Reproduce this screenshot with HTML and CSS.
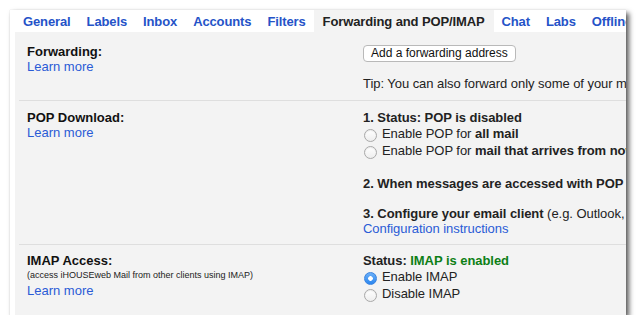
FILE: index.html
```html
<!DOCTYPE html>
<html>
<head>
<meta charset="utf-8">
<link rel="stylesheet" href="styles.css">
</head>
<body>
<div class="shot">
  <nav class="tabs">
    <a class="tab">General</a>
    <a class="tab">Labels</a>
    <a class="tab">Inbox</a>
    <a class="tab">Accounts</a>
    <a class="tab">Filters</a>
    <span class="tab active">Forwarding and POP/IMAP</span>
    <a class="tab">Chat</a>
    <a class="tab">Labs</a>
    <a class="tab">Offline</a>
    <a class="tab">Themes</a>
  </nav>
  <div class="content">
    <div class="row row-fwd">
      <div class="lcol">
        <div class="label">Forwarding:</div>
        <a class="link">Learn more</a>
      </div>
      <div class="rcol">
        <span class="btn">Add a forwarding address</span>
        <div class="line tip">Tip: You can also forward only some of your mail by creating a filter!</div>
      </div>
    </div>
    <div class="row row-pop">
      <div class="lcol">
        <div class="label">POP Download:</div>
        <a class="link">Learn more</a>
      </div>
      <div class="rcol">
        <div class="line"><b>1. Status: POP is disabled</b></div>
        <div class="opt"><span class="radio"></span>Enable POP for <b>all mail</b></div>
        <div class="opt"><span class="radio"></span>Enable POP for <b>mail that arrives from now on</b></div>
        <div class="line sec"><b>2. When messages are accessed with POP</b> <span class="select">keep iHOUSEweb Mail's copy in the Inbox</span></div>
        <div class="line sec"><b>3. Configure your email client</b> (e.g. Outlook, Eudora, Netscape Mail)</div>
        <a class="link line">Configuration instructions</a>
      </div>
    </div>
    <div class="row row-imap">
      <div class="lcol">
        <div class="label">IMAP Access:</div>
        <div class="small">(access iHOUSEweb Mail from other clients using IMAP)</div>
        <a class="link">Learn more</a>
      </div>
      <div class="rcol">
        <div class="line"><b>Status:</b> <b class="green">IMAP is enabled</b></div>
        <div class="opt"><span class="radio on"></span>Enable IMAP</div>
        <div class="opt"><span class="radio"></span>Disable IMAP</div>
      </div>
    </div>
  </div>
</div>
</body>
</html>
```
FILE: styles.css
```css
html, body {
  margin: 0;
  padding: 0;
  background: #fff;
}

body {
  font-family: "Liberation Sans", Arial, Helvetica, sans-serif;
  font-size: 13px;
  color: #222;
}

.shot {
  margin: 10px 0 0 10px;
  width: 616px;
  height: 305px;
  background: #fff;
  box-shadow: 3px 3px 5px rgba(0, 0, 0, 0.65), 0 0 1px rgba(0, 0, 0, 0.18);
  overflow: hidden;
  display: flex;
  flex-direction: column;
}

.tabs {
  display: flex;
  height: 22px;
  padding-left: 5px;
  white-space: nowrap;
  flex: none;
}

.tab {
  padding: 0 8px;
  line-height: 23px;
  font-weight: bold;
  letter-spacing: -0.12px;
  color: #2553c8;
}

.tab.active {
  padding: 0 9px;
  background: #f3f3f3;
  color: #222;
}

.content {
  flex: 1;
  background: #f3f3f3;
  margin-left: 5px;
}

.row {
  display: flex;
  margin-left: 4px;
  border-top: 1px solid #dedede;
  white-space: nowrap;
}

.row-fwd {
  border-top: none;
  padding: 12px 0 9px;
}

.row-pop {
  padding: 9px 0 8px;
}

.row-imap {
  padding: 8px 0 0;
}

.lcol {
  width: 336px;
  padding-left: 8px;
  flex: none;
  line-height: 15px;
}

.rcol {
  flex: none;
  line-height: 15px;
  letter-spacing: -0.05px;
}

.label {
  font-weight: bold;
  color: #111;
}

.link {
  display: block;
  color: #2a5bd6;
}

.small {
  font-size: 9px;
  color: #222;
}

.line {
  display: block;
  height: 15px;
}

.sec {
  margin-top: 16px;
}

.btn {
  display: inline-block;
  margin-top: 1px;
  height: 15px;
  padding: 0 7px;
  border: 1px solid #b9b9b9;
  border-radius: 4px;
  background: #fff;
  font-size: 12px;
  line-height: 15px;
  letter-spacing: 0;
  color: #111;
}

.tip {
  margin-top: 14px;
}

.opt {
  height: 17px;
  line-height: 17px;
}

.radio {
  display: inline-block;
  width: 11px;
  height: 11px;
  margin: 0 5px 0 1px;
  vertical-align: -4px;
  border: 1px solid #a9a9a9;
  border-radius: 50%;
  background: linear-gradient(#ffffff, #eeeeee);
  box-shadow: inset 0 1px 1px rgba(0, 0, 0, 0.08);
}

.radio.on {
  border-color: #3a83e0;
  background: radial-gradient(circle, #fff 0, #fff 2px, transparent 2.6px),
              linear-gradient(#6cb0f8, #2a86ef);
  box-shadow: none;
}

.select {
  display: inline-block;
  margin-left: 2px;
  height: 15px;
  padding: 0 6px;
  border: 1px solid #c8c8c8;
  background: #fafafa;
  font-weight: normal;
}

.green {
  color: #0d7f16;
}
```
